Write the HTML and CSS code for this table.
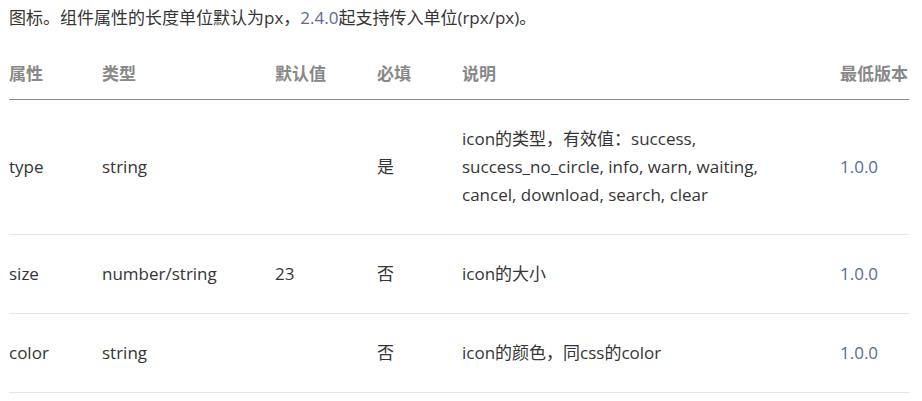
FILE: index.html
```html
<!DOCTYPE html>
<html lang="zh-CN">
<head>
<meta charset="utf-8">
<link rel="stylesheet" href="styles.css">
</head>
<body>
<p class="intro">图标。组件属性的长度单位默认为px，<span class="ver">2.4.0</span>起支持传入单位(rpx/px)。</p>
<table class="props">
  <colgroup>
    <col class="c1"><col class="c2"><col class="c3"><col class="c4"><col class="c5"><col class="c6">
  </colgroup>
  <thead>
    <tr><th>属性</th><th>类型</th><th>默认值</th><th>必填</th><th>说明</th><th>最低版本</th></tr>
  </thead>
  <tbody>
    <tr><td>type</td><td>string</td><td></td><td>是</td><td class="desc">icon的类型，有效值：success, success_no_circle, info, warn, waiting, cancel, download, search, clear</td><td class="ver">1.0.0</td></tr>
    <tr><td>size</td><td>number/string</td><td>23</td><td>否</td><td class="desc">icon的大小</td><td class="ver">1.0.0</td></tr>
    <tr><td>color</td><td>string</td><td></td><td>否</td><td class="desc">icon的颜色，同css的color</td><td class="ver">1.0.0</td></tr>
  </tbody>
</table>
</body>
</html>
```
FILE: styles.css
```css
html, body { margin: 0; padding: 0; background: #fff; }
body {
  padding: 0 13px 0 9px;
  font-family: "Open Sans", "Noto Sans CJK SC", sans-serif;
  font-size: 17px;
  color: #353535;
}
.intro { margin: 4px 0 17px; line-height: 28px; }
.ver { color: #576b95; }
.props {
  width: 900px;
  border-collapse: collapse;
  table-layout: fixed;
}
.c1 { width: 93px; }
.c2 { width: 173px; }
.c3 { width: 102px; }
.c4 { width: 85px; }
.c5 { width: 378px; }
.c6 { width: 69px; }
.props th {
  text-align: left;
  font-weight: bold;
  color: #888;
  line-height: 28px;
  padding: 11px 0;
  border-bottom: 1px solid #8c8c8c;
  white-space: nowrap;
}
.props td {
  line-height: 28px;
  padding: 25px 0;
  border-bottom: 1px solid #e5e5e5;
  vertical-align: middle;
}
.props td.desc { padding-right: 30px; }
```
